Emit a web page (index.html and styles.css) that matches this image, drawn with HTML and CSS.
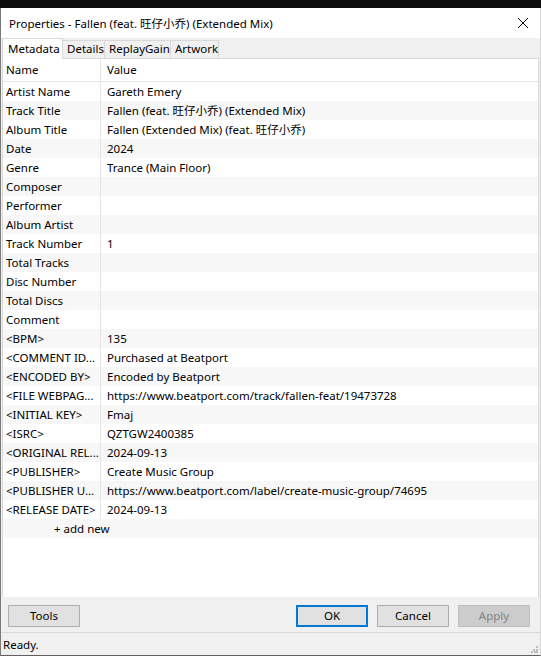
FILE: index.html
```html
<!DOCTYPE html>
<html lang="en">
<head>
<meta charset="UTF-8">
<title>Properties - Fallen (feat. 旺仔小乔) (Extended Mix)</title>
<link rel="stylesheet" href="styles.css">
</head>
<body>

<div class="backdrop"></div>

<div class="dialog">
    <div class="titlebar">
        <span class="caption">Properties - Fallen (feat. 旺仔小乔) (Extended Mix)</span>
        <svg class="close" width="12" height="12" viewBox="0 0 12 12">
            <path d="M1 1 L11 11 M11 1 L1 11" stroke="#000" stroke-width="1" fill="none"/>
        </svg>
    </div>

    <div class="tabs">
        <div class="tab active">Metadata</div>
        <div class="tab details">Details</div>
        <div class="tab gain">ReplayGain</div>
        <div class="tab artwork">Artwork</div>
    </div>

    <div class="panel">
        <div class="grid">
            <div class="head"><span class="name">Name</span><span class="value">Value</span></div>
            <div class="row"><span class="name">Artist Name</span><span class="value">Gareth Emery</span></div>
            <div class="row"><span class="name">Track Title</span><span class="value">Fallen (feat. 旺仔小乔) (Extended Mix)</span></div>
            <div class="row"><span class="name">Album Title</span><span class="value">Fallen (Extended Mix) (feat. 旺仔小乔)</span></div>
            <div class="row"><span class="name">Date</span><span class="value">2024</span></div>
            <div class="row"><span class="name">Genre</span><span class="value">Trance (Main Floor)</span></div>
            <div class="row"><span class="name">Composer</span><span class="value"></span></div>
            <div class="row"><span class="name">Performer</span><span class="value"></span></div>
            <div class="row"><span class="name">Album Artist</span><span class="value"></span></div>
            <div class="row"><span class="name">Track Number</span><span class="value">1</span></div>
            <div class="row"><span class="name">Total Tracks</span><span class="value"></span></div>
            <div class="row"><span class="name">Disc Number</span><span class="value"></span></div>
            <div class="row"><span class="name">Total Discs</span><span class="value"></span></div>
            <div class="row"><span class="name">Comment</span><span class="value"></span></div>
            <div class="row"><span class="name">&lt;BPM&gt;</span><span class="value">135</span></div>
            <div class="row"><span class="name">&lt;COMMENT ID...</span><span class="value">Purchased at Beatport</span></div>
            <div class="row"><span class="name">&lt;ENCODED BY&gt;</span><span class="value">Encoded by Beatport</span></div>
            <div class="row"><span class="name">&lt;FILE WEBPAG...</span><span class="value">https://www.beatport.com/track/fallen-feat/19473728</span></div>
            <div class="row"><span class="name">&lt;INITIAL KEY&gt;</span><span class="value">Fmaj</span></div>
            <div class="row"><span class="name">&lt;ISRC&gt;</span><span class="value">QZTGW2400385</span></div>
            <div class="row"><span class="name">&lt;ORIGINAL REL...</span><span class="value">2024-09-13</span></div>
            <div class="row"><span class="name">&lt;PUBLISHER&gt;</span><span class="value">Create Music Group</span></div>
            <div class="row"><span class="name">&lt;PUBLISHER U...</span><span class="value">https://www.beatport.com/label/create-music-group/74695</span></div>
            <div class="row"><span class="name">&lt;RELEASE DATE&gt;</span><span class="value">2024-09-13</span></div>
            <div class="row add">+ add new</div>
        </div>
    </div>

    <div class="buttons">
        <button class="btn">Tools</button>
        <div class="spacer"></div>
        <button class="btn default">OK</button>
        <button class="btn">Cancel</button>
        <button class="btn" disabled>Apply</button>
    </div>

    <div class="status">
        <span>Ready.</span>
        <svg class="grip" width="7" height="7" viewBox="0 0 7 7">
            <rect x="5" y="0" width="2" height="2" fill="#bcbcbc"/>
            <rect x="2" y="3" width="2" height="2" fill="#bcbcbc"/>
            <rect x="5" y="3" width="2" height="2" fill="#bcbcbc"/>
            <rect x="0" y="5" width="2" height="2" fill="#bcbcbc"/>
            <rect x="3" y="5" width="2" height="2" fill="#bcbcbc"/>
            <rect x="5" y="5" width="2" height="2" fill="#bcbcbc"/>
        </svg>
    </div>
</div>

</body>
</html>
```

FILE: styles.css
```css
* {
    margin: 0;
    box-sizing: border-box;
}

body {
    margin: 0;
    width: 541px;
    height: 658px;
    overflow: hidden;
    background: #fff;
    font-family: "Noto Sans", "Noto Sans CJK SC", sans-serif;
    font-size: 11.5px;
    color: #000;
}

.backdrop {
    height: 8px;
    background: #0c0c0c;
}

.dialog {
    height: 648px;
    border-left: 1px solid #7a7a7a;
    border-right: 1px solid #d6d6d6;
    border-bottom: 1px solid #5f5f5f;
    background: #f0f0f0;
    display: flex;
    flex-direction: column;
}

/* window caption */
.titlebar {
    height: 30px;
    background: #fff;
    display: flex;
    align-items: center;
    padding: 0 11px 0 8px;
}

.titlebar .caption {
    flex: 1;
}

/* tab strip */
.tabs {
    height: 20px;
    display: flex;
    align-items: flex-end;
    padding-left: 1px;
    background: #f0f0f0;
    position: relative;
    z-index: 1;
}

.tab {
    height: 18px;
    line-height: 16px;
    padding-left: 4px;
    border: 1px solid #d9d9d9;
    border-bottom: none;
    border-left: none;
    background: #f0f0f0;
}

.tab.active {
    width: 61px;
    height: 21px;
    margin-bottom: -1px;
    line-height: 19px;
    padding-left: 5px;
    border-left: 1px solid #d9d9d9;
    background: #fff;
}

.tab.details { width: 42px; }
.tab.gain { width: 66px; }
.tab.artwork { width: 48px; }

/* property list */
.panel {
    height: 539px;
    margin: 0 1px;
    background: #fff;
    border: 1px solid #d9d9d9;
    border-bottom: none;
}

.grid .head,
.grid .row {
    display: grid;
    grid-template-columns: 97px 1fr;
    white-space: nowrap;
}

.grid .head {
    height: 23px;
    line-height: 21px;
    border-bottom: 1px solid #e5e5e5;
}

.grid .row {
    height: 19px;
    line-height: 19px;
}

.grid .row:nth-child(odd) {
    background: #f7f7f7;
}

.name {
    padding-left: 3px;
    overflow: hidden;
}

.value {
    padding-left: 6px;
    border-left: 1px solid #e5e5e5;
    overflow: hidden;
}

.grid .row.add {
    display: block;
    padding-left: 51px;
}

/* dialog buttons */
.buttons {
    height: 36px;
    display: flex;
    align-items: center;
    gap: 9px;
    padding: 2px 10px 0 7px;
    border-bottom: 1px solid #d9d9d9;
}

.spacer {
    flex: 1;
}

.btn {
    width: 72px;
    height: 22px;
    font-family: inherit;
    font-size: 11.5px;
    color: #000;
    background: #e1e1e1;
    border: 1px solid #adadad;
    padding: 0;
}

.btn.default {
    border: 2px solid #0078d7;
}

.btn:disabled {
    background: #cccccc;
    border-color: #bfbfbf;
    color: #838383;
}

/* status bar */
.status {
    flex: 1;
    display: flex;
    align-items: center;
    justify-content: space-between;
    padding: 0 2px;
}

.status .grip {
    align-self: flex-end;
    margin-bottom: 2px;
}
```
